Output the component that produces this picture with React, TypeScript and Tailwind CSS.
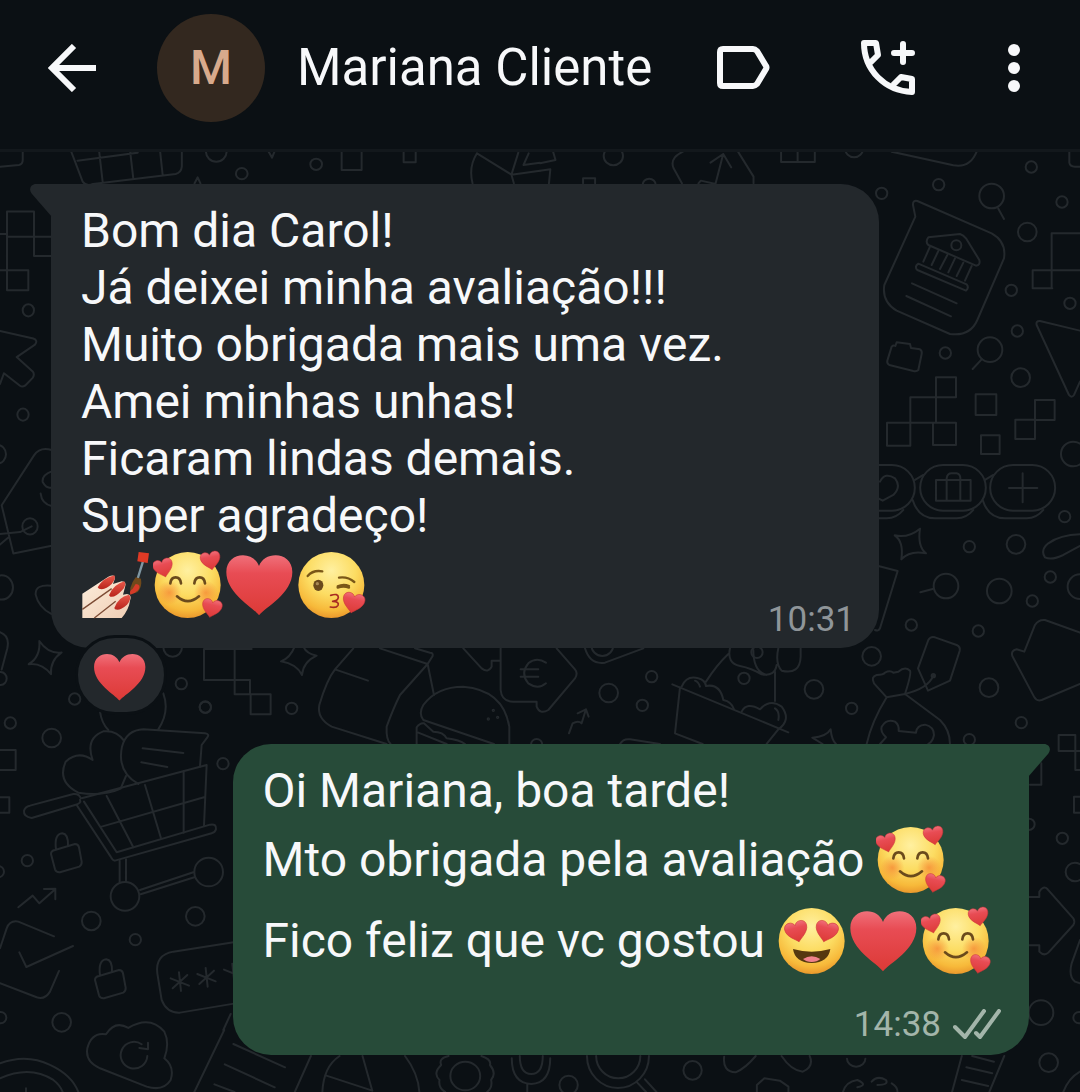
import type { ReactNode } from "react";

type Circle = [x: number, y: number, r: number];

/** One block of wallpaper doodles, drawn in its own enlarged coordinates. */
type Doodle = {
  at: string;
  circles: Circle[];
  paths: string[];
};

const LOCK =
  "M165 480L225 462Q235 462 237 472L245 515Q246 525 238 530L180 547Q168 548 165 538L153 492Q153 482 165 480ZM168 478Q162 432 187 430Q205 432 204 466";

const DOODLES: Doodle[] = [
  {
    at: "scale(.3444 .3333)",
    circles: [[628, 455, 30], [702, 521, 17], [918, 493, 17]],
    paths: [
      "M0 500L55 495Q66 493 66 480V440",
      "M205 450L240 545Q250 560 270 552L510 522Q526 518 528 500V450M225 482L400 458M288 455L298 545M378 455L387 535M465 455L472 522",
      "M780 455L790 473L797 455M992 455V510H1050V455M1172 455V487H1207V455M565 550L574 532L582 550",
      "M1385 460Q1360 500 1372 550M1385 460L1485 524L1568 512M1485 524L1492 550M1485 524L1505 458M1535 460L1520 495L1568 488",
    ],
  },
  {
    at: "translate(540 0) scale(.3444 .3333)",
    circles: [[213, 468, 28], [317, 555, 19], [912, 446, 26]],
    paths: [
      "M0 490L45 480L38 455M0 512L30 508L26 550M125 550V535H160V550",
      "M415 455Q375 475 388 505L412 550M575 455L620 530V550M510 550L532 462M495 488L532 462L555 502M460 550L467 542L510 552",
      "M700 440V486H798V440M748 440V486",
    ],
  },
  {
    at: "translate(860 150) scale(.3333)",
    circles: [
      [395, 138, 37], [289, 286, 15], [390, 599, 37], [502, 246, 28], [454, 421, 17], [630, 460, 17],
      [472, 543, 17], [256, 609, 17], [482, 683, 28], [640, 912, 37], [614, 1100, 17], [65, 130, 17],
      [236, 104, 17], [514, 51, 17], [606, 156, 17],
    ],
    paths: [
      "M95 5L280 46Q330 55 350 5M628 5V38Q630 50 645 50H660M415 176L432 207M365 628L338 657",
      "M166 200L159 165Q158 150 172 153L395 250Q440 275 432 325L352 510Q330 560 270 552L110 482Q65 455 73 405Z",
      "M205 262L300 252Q310 255 318 265L358 330Q362 345 348 347L205 285Q195 275 205 262Z",
      "M210 290L190 335M235 303L215 345M262 315L240 357M285 325L265 367M310 338L290 378M335 348L315 392",
      "M175 341L320 403Q328 412 318 422L172 360Q162 350 175 341ZM156 400L290 460M139 438L273 499",
      "M575 415V250H660M518 361H660M518 361V415H577",
      "M660 542L540 513Q527 512 530 525L627 735Q635 745 642 735L660 695",
      "M95 590Q100 585 106 588L110 577L150 582L153 594L180 598Q187 602 185 612L175 660Q170 665 160 663L88 645Q80 640 82 632Z",
      "M228 682H288V742H228ZM228 742V818M228 742H151V887H81V818H288V885H219V818",
      "M347 733H409V795H347ZM363 856H419V912H363ZM525 750H584V810H525ZM466 809H525V867H466Z",
      "M50 945H96A68 68 0 0 1 96 1082H50M249 945H309A68 68 0 0 1 309 1082H249A68 68 0 0 1 249 945ZM459 945H517A68 68 0 0 1 517 1082H459A68 68 0 0 1 459 945Z",
      "M158 1050Q175 1105 225 1105H290Q320 1105 340 1080M368 1050Q385 1105 435 1105H500Q530 1105 550 1080M55 1105H80Q110 1105 130 1080M165 990L190 975M375 990L400 975",
      "M60 995Q75 965 105 985Q125 1010 100 1035L68 1052L55 1045M228 990H332V1052H228ZM260 1052V985Q262 970 275 970H290Q301 972 301 985V1052M488 970V1057M447 1014H532",
    ],
  },
  {
    at: "translate(860 500) scale(.3333)",
    circles: [
      [328, 140, 17], [468, 133, 28], [571, 231, 17], [258, 258, 37], [418, 273, 37], [660, 260, 37],
      [517, 303, 17], [154, 375, 17], [355, 393, 17], [35, 469, 28], [387, 563, 28], [484, 668, 17],
      [328, 719, 17], [220, 527, 5],
    ],
    paths: [
      "M104 106Q145 115 180 86Q172 140 198 160Q150 150 124 178Q132 125 104 106ZM181 277L218 267",
      "M660 103Q600 105 565 130Q540 150 555 172Q575 182 610 165L660 138",
      "M55 198L113 213L60 385Q55 395 45 390",
      "M205 420Q212 408 225 412L290 435Q302 440 299 453L270 542L204 572L174 505ZM135 582Q205 565 220 527",
      "M135 582L80 592L42 550Q32 530 50 525Q70 525 75 518Q90 510 100 518L115 515Q135 498 150 512Q155 520 135 582L240 660Q270 690 270 732M80 592Q35 665 20 732",
      "M60 732L78 712Q60 695 65 680Q80 655 105 665Q118 675 116 693L168 698Q170 675 195 674Q222 680 222 705Q218 725 205 732",
      "M660 398L555 360Q535 358 525 375L493 455L470 448Q452 452 457 468L522 590Q530 605 545 600L660 552",
    ],
  },
  {
    at: "translate(980 620) scale(.3333)",
    circles: [[247, 655, 17], [147, 613, 17], [285, 756, 28], [183, 1178, 37], [297, 1193, 17], [206, 1328, 28]],
    paths: [
      "M236 345H286V393H236ZM300 450H286V393H300M300 530H282V578H300M150 494H184V430",
      "M148 831H178V815Q190 795 203 808L280 895Q286 905 280 915L205 998Q192 1010 178 995V976H148",
      "M300 960L275 1030Q265 1070 285 1085L300 1090M250 1416Q265 1375 300 1355",
    ],
  },
  {
    at: "translate(180 1030) scale(.574 .3333)",
    circles: [],
    paths: [
      "M77 0L25 186M228 78L200 186M93 42L183 112M78 103L165 172M60 163L95 186",
      "M248 186Q250 110 278 78M392 78Q415 130 417 186M318 78L335 182M255 137L335 182",
      "M471 138A26 43 0 1 0 523 138A26 43 0 1 0 471 138M468 78Q450 85 455 105Q440 130 452 150Q450 175 462 186M525 78Q543 88 540 105Q552 130 542 150Q545 172 535 186",
      "M592 78Q592 132 612 132Q632 132 632 78M578 85Q578 160 612 162Q645 160 645 85M605 162V186",
      "M725 78A38 66 0 0 0 802 78M709 78A54 96 0 0 0 817 78M795 155L812 186M810 148L830 186",
      "M877 121A16 28 0 1 0 909 121A16 28 0 1 0 877 121M661 165A16 28 0 1 0 693 165A16 28 0 1 0 661 165M1162 86A16 24 0 1 0 1194 86",
      "M948 80Q945 125 968 127Q985 115 1003 78M1048 78Q1065 122 1085 125Q1105 110 1097 78M1005 186V165L1018 145L1045 152L1060 170V186",
      "M1155 186Q1160 155 1180 150Q1200 165 1180 172M1205 155Q1215 135 1230 150Q1235 165 1215 165M1240 160Q1250 170 1250 186",
      "M1362 78L1345 186M1436 78L1410 186M1380 78L1418 95M1370 112L1415 130M1362 150L1408 168",
    ],
  },
  {
    at: "translate(0 690) scale(.3333)",
    circles: [
      [224, 27, 17], [31, 99, 17], [155, 144, 28], [616, 51, 17], [669, 221, 17], [82, 512, 17], [-5, 545, 17],
      [274, 693, 28], [586, 679, 28], [406, 749, 17], [185, 997, 28], [2, 983, 17], [375, 619, 43], [626, 546, 43],
    ],
    paths: [
      "M0 180H47V240H0M0 322H28V368H0M300 65Q305 100 325 120M490 10Q510 65 475 118",
      "M378 258L362 296Q310 320 235 308Q170 275 197 215Q235 180 278 210Q255 145 310 124Q350 120 372 152",
      "M415 282Q350 245 366 170Q380 120 430 118L615 130Q630 132 622 142L605 165L600 230M428 175L550 189M424 217L502 231",
      "M245 325L620 225L612 408M612 322L305 410M320 318L400 472M435 285L483 445M551 243V428",
      "M252 335L350 487L630 404Q650 400 648 418Q645 428 635 430L345 512Q338 512 332 500L230 345",
      "M240 330Q245 340 225 345L95 384Q70 380 72 362Q75 350 90 347L220 312Q238 310 242 325",
      "M359 512V575M378 508V575M420 600L580 547M422 613L583 562",
      LOCK,
      "M55 652L98 617L118 640L163 600M132 597L166 596L166 628",
      "M0 775L20 715Q30 690 55 695L162 739M58 787L79 831L219 768M177 843L150 905Q135 930 110 922L0 880",
      "M720 754L520 785Q465 795 472 850L485 930Q500 970 540 968L720 938",
      "M537 847L543 903M512 865L567 887M562 855L518 895M617 834L623 890M592 852L647 874M642 842L598 882M697 821L703 877M672 839L727 861",
      "M318 1033Q345 990 385 1014Q450 975 493 1025Q510 1060 493 1105Q525 1130 512 1170Q490 1205 440 1190L300 1135Q255 1115 262 1075Q275 1025 318 1033Z",
      "M425 1063A40 40 0 1 0 442 1098M444 1058V1078L418 1074M692 972L670 1020",
      "M0 1120Q80 1090 150 1125Q215 1155 235 1206M0 1165Q90 1125 160 1170Q180 1185 188 1206M78 1195V1206",
    ],
  },
  {
    at: "translate(44 816) scale(.3333)",
    circles: [],
    paths: [LOCK],
  },
  {
    at: "translate(0 150) scale(.3333 .3571)",
    circles: [[85, 449, 17], [69, 741, 17], [-8, 852, 26], [90, 1054, 23], [5, 1225, 34], [2, 1480, 18]],
    paths: [
      "M153 297H102V172H21V393H85V337H0M0 235H21M21 243H153",
      "M0 507L100 528Q115 533 105 545L50 580L98 620Q105 628 98 638L75 660Q67 665 60 660L12 625L0 655",
      "M155 840Q120 830 102 855L5 995L40 1130L155 1108M155 900Q125 910 128 930Q140 950 155 945M122 962Q125 990 155 997M0 1075L60 1070L95 1054M0 1105L25 1085",
      "M155 1220Q105 1215 107 1245Q115 1280 155 1300M0 1350Q30 1360 22 1395L5 1455",
      "M118 1375Q145 1412 185 1407Q150 1430 153 1468Q125 1435 86 1440Q122 1420 118 1375Z",
    ],
  },
  {
    at: "translate(150 640) scale(.3333)",
    circles: [
      [68, 22, 28], [94, 131, 17], [166, 202, 17], [425, 205, 17], [1160, 314, 17],
      [1030, 211, 2], [1015, 237, 2], [1043, 232, 2],
    ],
    paths: [
      "M305 27H162V120H300V163H254V27M302 163H362V223H302Z",
      "M434 20Q420 55 393 64Q440 72 456 105Q460 65 500 47Q470 42 460 20",
      "M610 25L555 88Q530 120 508 195Q500 235 545 260L710 312M555 88L654 122M690 25L833 72L848 48Q850 38 840 38L795 25M833 72L852 165M833 72L750 165Q730 205 710 260Q708 300 722 312",
      "M1032 312L820 240Q805 220 820 195Q860 140 940 140Q1060 150 1078 260V312M800 312V262Q810 248 822 250L850 275Q880 275 890 295Q930 300 945 312M805 278L890 312",
      "M940 25L995 85Q1015 100 1025 80V62H1052V150Q1055 185 1090 185H1160V200Q1170 225 1195 210L1275 115Q1285 100 1275 88L1220 25M1052 62V25",
      "M1188 68Q1160 50 1135 70Q1110 100 1135 130Q1165 150 1188 130M1112 88H1165M1112 110H1165",
      "M1257 280L1268 250Q1285 240 1295 250L1308 208M1283 220L1308 208L1316 230",
    ],
  },
  {
    at: "translate(580 640) scale(.3333)",
    circles: [
      [86, 159, 28], [215, 110, 17], [187, 196, 17], [702, 148, 28], [815, 205, 17], [492, 115, 17],
      [531, 37, 17], [67, 15, 33],
    ],
    paths: [
      "M15 25Q30 75 75 68L190 25M277 133L625 277M300 142L285 280L368 312",
      "M305 140Q320 105 355 115Q375 120 378 138Q420 130 430 180Q455 185 462 208M485 215Q500 185 540 208Q570 175 605 200Q635 240 595 268L560 312",
      "M378 125Q410 75 445 42M450 25Q440 70 480 78Q515 85 545 103Q585 110 590 75M520 30Q520 95 560 105M585 95V183M595 25Q585 70 605 92Q660 105 662 50V25",
      "M768 312Q755 300 752 268Q740 290 697 293L728 312M120 312Q130 295 150 298L240 312M345 122Q355 125 360 140M585 205Q600 215 595 240",
    ],
  },
];

function Wallpaper() {
  return (
    <svg
      aria-hidden
      viewBox="0 152 1080 940"
      preserveAspectRatio="xMidYMin slice"
      className="absolute inset-0 h-full w-full fill-none stroke-[#24292d] stroke-2 [&_*]:[vector-effect:non-scaling-stroke]"
    >
      {DOODLES.map((d) => (
        <g key={d.at} transform={d.at} strokeLinecap="round" strokeLinejoin="round">
          {d.circles.map(([x, y, r]) => (
            <circle key={`${x}-${y}`} cx={x} cy={y} r={r} />
          ))}
          {d.paths.map((p) => (
            <path key={p} d={p} />
          ))}
        </g>
      ))}
    </svg>
  );
}

const HEART =
  "M98 190C80 165 0 125 0 60C0 27 25 10 50 10C72 10 90 22 98 42C106 22 125 10 148 10C173 10 198 27 198 60C198 125 118 165 98 190Z";

/** Gradients shared by every emoji on the page. */
function EmojiDefs() {
  return (
    <svg aria-hidden className="absolute h-0 w-0">
      <defs>
        <radialGradient id="face" cx=".5" cy=".28" r=".74">
          <stop offset="0" stopColor="#fff0a0" />
          <stop offset=".5" stopColor="#fcdc62" />
          <stop offset=".82" stopColor="#f7b93a" />
          <stop offset="1" stopColor="#e8932a" />
        </radialGradient>
        <linearGradient id="heart" x1="0" y1="0" x2="0" y2="1">
          <stop offset="0" stopColor="#f0707a" />
          <stop offset=".3" stopColor="#e84c54" />
          <stop offset="1" stopColor="#dc3a36" />
        </linearGradient>
        <radialGradient id="blush">
          <stop offset="0" stopColor="#f58233" stopOpacity=".7" />
          <stop offset="1" stopColor="#f58233" stopOpacity="0" />
        </radialGradient>
        <linearGradient id="skin" x1="0" y1="0" x2="1" y2="1">
          <stop offset="0" stopColor="#fdeedd" />
          <stop offset="1" stopColor="#efceb4" />
        </linearGradient>
        <linearGradient id="nail" x1="0" y1="0" x2="0" y2="1">
          <stop offset="0" stopColor="#e9584a" />
          <stop offset="1" stopColor="#b9251c" />
        </linearGradient>
      </defs>
    </svg>
  );
}

function Emoji({ label, small, children }: { label: string; small?: boolean; children: ReactNode }) {
  return (
    <svg
      role="img"
      aria-label={label}
      viewBox="-4 -9 216 216"
      className={small ? "h-14 w-14 shrink-0" : "h-[72px] w-[72px] shrink-0"}
    >
      {children}
    </svg>
  );
}

function MiniHeart({ x, y, turn, size = 0.3 }: { x: number; y: number; turn: number; size?: number }) {
  return (
    <path
      d={HEART}
      fill="url(#heart)"
      stroke="#cc3238"
      strokeWidth="5"
      transform={`translate(${x} ${y}) rotate(${turn}) scale(${size}) translate(-99 -98)`}
    />
  );
}

function RedHeart({ small }: { small?: boolean }) {
  return (
    <Emoji label="❤️" small={small}>
      <path d={HEART} fill="url(#heart)" />
    </Emoji>
  );
}

function FaceWithHearts() {
  return (
    <Emoji label="🥰">
      <circle cx="100" cy="99" r="99" fill="url(#face)" />
      <circle cx="45" cy="122" r="36" fill="url(#blush)" />
      <circle cx="155" cy="122" r="36" fill="url(#blush)" />
      <g fill="none" stroke="#6a4a1c" strokeWidth="8" strokeLinecap="round">
        <path d="M48 94Q50 76 64 76Q78 76 80 94M120 94Q122 76 136 76Q150 76 152 94" />
        <path d="M68 133Q100 162 134 133" />
      </g>
      <MiniHeart x={27} y={48} turn={-15} />
      <MiniHeart x={169} y={26} turn={-10} />
      <MiniHeart x={172} y={169} turn={12} />
    </Emoji>
  );
}

function KissFace() {
  return (
    <Emoji label="😘">
      <circle cx="99" cy="99" r="99" fill="url(#face)" />
      <ellipse cx="60" cy="100" rx="15" ry="17" fill="#6a4a1c" />
      <circle cx="57" cy="95" r="5" fill="#a98a55" />
      <g fill="none" stroke="#7a5717" strokeWidth="7" strokeLinecap="round" strokeLinejoin="round">
        <path d="M28 72Q44 53 72 58M122 77Q148 73 168 90M118 103Q135 95 152 102M118 107Q136 101 152 107" />
        <path
          d="M97 130Q120 123 120 136Q119 146 103 148Q124 149 119 160Q114 169 96 165"
          stroke="#a82c22"
          strokeWidth="5"
        />
      </g>
      <MiniHeart x={165} y={153} turn={12} size={0.33} />
    </Emoji>
  );
}

function HeartEyes() {
  return (
    <Emoji label="😍">
      <circle cx="100" cy="99" r="99" fill="url(#face)" />
      <MiniHeart x={55} y={71} turn={-14} size={0.34} />
      <MiniHeart x={144} y={71} turn={14} size={0.34} />
      <path d="M44 123Q100 139 156 123Q150 164 100 165Q50 164 44 123Z" fill="#56380f" />
      <path d="M74 153Q100 136 126 153Q116 162 100 162Q84 162 74 153Z" fill="#f0828c" />
    </Emoji>
  );
}

function NailPolish() {
  return (
    <Emoji label="💅🏻">
      <path
        d="M0 125L78 74Q100 64 97 82L92 96L118 88Q134 88 128 106L122 128L134 126Q150 128 143 146Q140 172 118 198H0Z"
        fill="url(#skin)"
      />
      <path d="M0 172L88 110M36 198L100 148" fill="none" stroke="#7d4c35" strokeWidth="4" />
      <g fill="url(#nail)">
        <path d="M46 106Q62 78 96 70Q102 80 88 96Q68 116 50 110Z" />
        <path d="M80 130Q92 98 126 88Q134 100 120 114Q98 138 84 134Z" />
        <path d="M96 168Q106 136 140 128Q150 138 134 158Q112 178 98 172Z" />
      </g>
      <path d="M182 28L166 80" stroke="#7f97a3" strokeWidth="7" />
      <path d="M160 76L176 80Q180 105 166 120Q142 132 144 108Q150 88 160 76Z" fill="#70491b" />
      <path d="M160 96Q178 98 168 114Q156 126 144 128Q140 116 150 112Z" fill="#d53b28" />
      <path d="M169 0L200 4L196 33L165 28Z" fill="#e03a25" />
    </Emoji>
  );
}

function IconButton({ label, children }: { label: string; children: ReactNode }) {
  return (
    <button type="button" aria-label={label} className="shrink-0 text-[#f7f8fa]">
      {children}
    </button>
  );
}

function ChatHeader({ name }: { name: string }) {
  return (
    <header className="flex items-center border-b-3 border-[#13181c] bg-[#0b1014] pt-3.5 pr-[57px] pb-[27px] pl-12">
      <IconButton label="Voltar">
        <svg width="48" height="48" viewBox="0 0 48 48" fill="none" stroke="currentColor" strokeWidth="6">
          <path d="M48 24H4M26 2L4 24L26 46" />
        </svg>
      </IconButton>
      <div className="ml-[61px] flex size-27 shrink-0 items-center justify-center rounded-full bg-[#33281f] text-[48px] font-medium text-[#d8aa8c]">
        {name[0]}
      </div>
      <h1 className="ml-8 min-w-0 flex-1 truncate text-[51px] leading-16 text-[#f7f8fa]">{name}</h1>
      <div className="flex shrink-0 items-center gap-[90px]">
        <IconButton label="Etiqueta">
          <svg width="54" height="44" viewBox="0 0 54 44" fill="none" stroke="currentColor" strokeWidth="6">
            <path
              d="M6 3H36Q38 3 40 5L49 20Q50 21.5 49 23L40 38Q38 40 36 40H6Q3 40 3 37V6Q3 3 6 3Z"
              strokeLinejoin="round"
            />
          </svg>
        </IconButton>
        <IconButton label="Ligar">
          <svg width="54" height="56" viewBox="0 0 54 56" fill="none" stroke="currentColor" strokeWidth="6">
            <path
              d="M9 23L17 15L15 3H3C3 30 24 51 51 52V39L40 37L32 45"
              strokeLinejoin="round"
            />
            <path d="M42 4V22M33 13H51" strokeLinecap="round" />
          </svg>
        </IconButton>
        <IconButton label="Mais opções">
          <svg width="18" height="54" viewBox="0 0 18 54" fill="currentColor">
            <circle cx="9" cy="9" r="6" />
            <circle cx="9" cy="27" r="6" />
            <circle cx="9" cy="45" r="6" />
          </svg>
        </IconButton>
      </div>
    </header>
  );
}

function DoubleCheck() {
  return (
    <svg role="img" aria-label="Entregue" width="48" height="32" viewBox="0 0 48 32" fill="none" stroke="currentColor" strokeWidth="4">
      <path d="M2 18L12 28L31 2M23 24L27 28L46 2" strokeLinecap="round" strokeLinejoin="round" />
    </svg>
  );
}

const RECEIVED = [
  "Bom dia Carol!",
  "Já deixei minha avaliação!!!",
  "Muito obrigada mais uma vez.",
  "Amei minhas unhas!",
  "Ficaram lindas demais.",
  "Super agradeço!",
];

export default function App() {
  return (
    <div className="flex min-h-screen flex-col bg-[#0b1014] font-['Roboto',sans-serif]">
      <EmojiDefs />
      <ChatHeader name="Mariana Cliente" />

      <main className="relative flex flex-1 flex-col overflow-hidden px-[51px] pt-8 pb-9 text-[48px] leading-[57px] text-[#f7f8fa]">
        <Wallpaper />

        <article className="relative w-[828px] max-w-full rounded-[38px] rounded-tl-none bg-[#23282c] pt-[18px] pr-6 pb-2 pl-[30px]">
          <svg aria-hidden width="22" height="33" viewBox="0 0 22 33" className="absolute top-0 -left-[21px] fill-[#23282c]">
            <path d="M22 0H6C1 0-2 5 2 10L22 33Z" />
          </svg>
          {RECEIVED.map((line) => (
            <p key={line}>{line}</p>
          ))}
          <div className="flex h-24 justify-between">
            <p className="flex h-[81px] items-center">
              <NailPolish />
              <FaceWithHearts />
              <RedHeart />
              <KissFace />
            </p>
            <time className="self-end text-[35px] leading-10 text-[#8f9599]">10:31</time>
          </div>
        </article>

        <button
          type="button"
          aria-label="Reação"
          className="relative -mt-[13px] ml-6 flex h-20 w-[92px] items-center justify-center rounded-full border-3 border-[#0b1014] bg-[#23282c] pt-1"
        >
          <RedHeart small />
        </button>

        <article className="relative mt-[29px] w-fit max-w-full self-end rounded-[38px] rounded-tr-none bg-[#274b39] pt-[18px] pr-9 pb-2.5 pl-[30px]">
          <svg aria-hidden width="22" height="33" viewBox="0 0 22 33" className="absolute top-0 -right-[21px] fill-[#274b39]">
            <path d="M0 0H16C21 0 24 5 20 10L0 33Z" />
          </svg>
          <p>Oi Mariana, boa tarde!</p>
          <p className="flex h-[81px] items-center gap-3">
            Mto obrigada pela avaliação
            <FaceWithHearts />
          </p>
          <p className="flex h-[81px] items-center gap-3">
            Fico feliz que vc gostou
            <span className="flex">
              <HeartEyes />
              <RedHeart />
              <FaceWithHearts />
            </span>
          </p>
          <div className="-mr-2 mt-6 flex items-center justify-end gap-3 text-[#a3b5aa]">
            <time className="text-[35px] leading-10">14:38</time>
            <DoubleCheck />
          </div>
        </article>
      </main>
    </div>
  );
}
